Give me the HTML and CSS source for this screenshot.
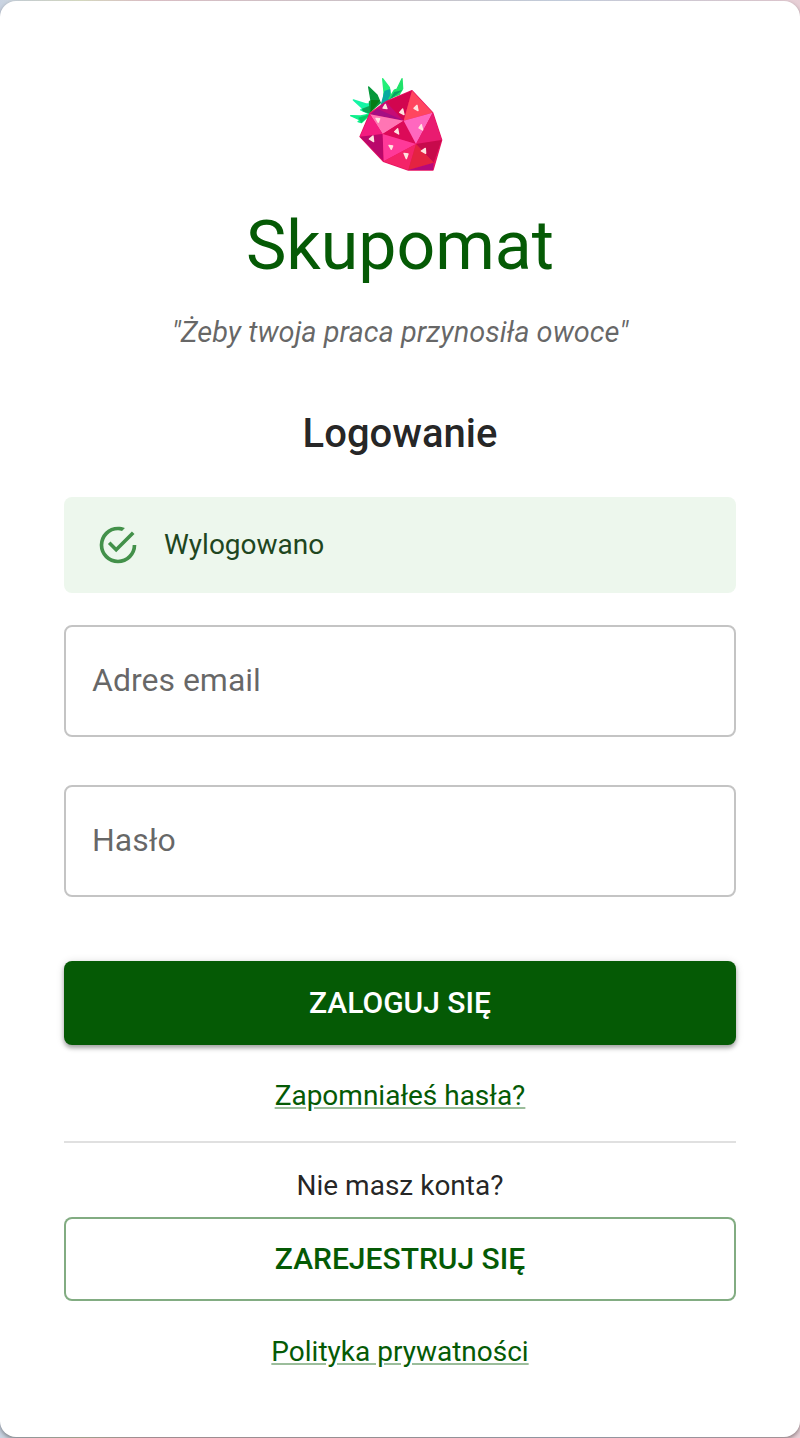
FILE: index.html
```html
<!DOCTYPE html>
<html lang="pl">

	<head>
		<meta charset="utf-8">
		<meta name="viewport" content="width=device-width,initial-scale=1">
		<title>Skupomat</title>
		<link rel="stylesheet" href="styles.css">
	</head>

	<body>
		<main class="card">
			<header class="brand">
				<svg class="logo" viewBox="30 15 300 300" aria-hidden="true">
					<!-- leaves -->
					<g stroke-width="4" stroke-linejoin="round">
						<path fill="#0ff08c" stroke="#0ff08c" d="M32 137L62 138L92 132L64 158L54 155L60 150Z" />
						<path fill="#06c964" d="M55 143L92 132L64 159Z" />
						<path fill="#14f5a4" stroke="#14f5a4" d="M40 90L78 102L105 102L85 130L62 120L67 115Z" />
						<path fill="#07a855" d="M66 116L105 101L90 132L68 124Z" />
						<path fill="#07983c" stroke="#07983c" d="M86 51L111 75L121 98L92 124L88 96L93 91Z" />
						<path fill="#047d15" d="M93 90L120 91L92 128Z" />
						<path fill="#23ef78" stroke="#23ef78" d="M128 26L148 52L152 76L130 98L132 66Z" />
						<path fill="#09aaa0" stroke="#09aaa0" d="M135 64L149 60L148 88L124 104Z" />
						<path fill="#20e26a" stroke="#20e26a" d="M186 26L188 56L178 73L147 86L163 60L171 57Z" />
						<path fill="#08a565" d="M163 66L188 60L148 90Z" />
					</g>
					<!-- fruit -->
					<path fill="#e81361" stroke="#e81361" stroke-width="4" stroke-linejoin="round" d="M90 130L138 95L216 62L278 128L305 210L279 300L205 300L130 274L60 200Z" />
					<path fill="#a50d83" d="M90 133L138 95L192 152Z" />
					<path fill="#c50b76" d="M112 116L138 95L192 152Z" />
					<path fill="#d2054f" d="M138 95L216 62L191 152Z" />
					<path fill="#ff465f" d="M216 62L278 128L191 152Z" />
					<path fill="#fb315f" d="M216 62L191 152L206 100Z" />
					<path fill="#ff75b4" d="M90 133L191 152L128 192Z" />
					<path fill="#f41c80" d="M90 133L128 192L60 200Z" />
					<path fill="#ba086b" d="M60 200L128 192L131 274Z" />
					<path fill="#dc0a58" d="M128 192L191 152L228 222Z" />
					<path fill="#ff67bf" d="M191 152L278 128L228 222Z" />
					<path fill="#e91b70" d="M278 128L305 210L228 222Z" />
					<path fill="#ff3999" d="M128 192L228 222L131 274Z" />
					<path fill="#f42368" d="M131 274L228 222L205 300Z" />
					<path fill="#c70a4c" d="M228 222L305 210L281 278Z" />
					<path fill="#e42341" d="M228 222L281 278L205 300Z" />
					<path fill="#b60a7a" d="M205 300L281 278L279 300Z" />
					<!-- seeds -->
					<g fill="#ffe3df" stroke="#ffe3df" stroke-width="4" stroke-linejoin="round">
						<path d="M136 103L141 116L129 114Z" />
						<path d="M188 117L192 134L179 127Z" />
						<path d="M231 106L234 122L222 115Z" />
						<path d="M108 145L119 146L115 157Z" />
						<path d="M173 176L176 192L164 185Z" />
						<path d="M244 164L248 180L237 174Z" />
						<path d="M99 198L101 215L88 207Z" />
						<path d="M147 226L158 228L154 238Z" />
						<path d="M192 250L204 252L199 266Z" />
						<path d="M256 235L257 250L244 243Z" />
					</g>
				</svg>
				<h1 class="title">Skupomat</h1>
				<p class="tagline">"Żeby twoja praca przynosiła owoce"</p>
			</header>

			<h2 class="subtitle">Logowanie</h2>

			<div class="alert" role="alert">
				<svg class="alert-icon" viewBox="0 0 24 24" aria-hidden="true">
					<path d="M20,12A8,8 0 0,1 12,20A8,8 0 0,1 4,12A8,8 0 0,1 12,4C12.76,4 13.5,4.11 14.2,4.31L15.77,2.74C14.61,2.26 13.34,2 12,2A10,10 0 0,0 2,12A10,10 0 0,0 12,22A10,10 0 0,0 22,12M7.91,10.08L6.5,11.5L11,16L21,6L19.59,4.58L11,13.17L7.91,10.08Z" />
				</svg>
				<span>Wylogowano</span>
			</div>

			<form class="login-form">
				<div class="field">
					<input type="email" id="email" class="field-input" placeholder=" " autocomplete="email">
					<label for="email" class="field-label">Adres email</label>
				</div>
				<div class="field">
					<input type="password" id="password" class="field-input" placeholder=" " autocomplete="current-password">
					<label for="password" class="field-label">Hasło</label>
				</div>
				<button type="submit" class="btn btn-primary">ZALOGUJ SIĘ</button>
			</form>

			<a class="link" href="#reset">Zapomniałeś hasła?</a>
			<hr class="divider">
			<p class="hint">Nie masz konta?</p>
			<button type="button" class="btn btn-outlined">ZAREJESTRUJ SIĘ</button>
			<a class="link" href="#privacy">Polityka prywatności</a>
		</main>
	</body>

</html>
```

FILE: styles.css
```css
* {
	box-sizing: border-box;
}

body {
	margin: 0;
	padding: 1px 0;
	background: linear-gradient(90deg, #c9d3e2, #dfe3c8 10%, #e5c8ce 18%, #d3cdd2 50%, #ccd6e6 70%, #e8cfd6);
	color: rgba(0, 0, 0, 0.87);
	font-family: Roboto, "Liberation Sans", sans-serif;
	font-size: 28px;
	line-height: 40px;
}

h1,
h2,
p {
	margin: 0;
}

.card {
	display: flex;
	flex-direction: column;
	padding: 74px 64px 65px;
	border-radius: 16px;
	background: #fff;
	box-shadow: 0 2px 4px rgba(0, 0, 0, 0.4);
}

.brand {
	display: flex;
	flex-direction: column;
	align-items: center;
	text-align: center;
}

.logo {
	width: 100px;
	height: 100px;
}

.title {
	margin-top: 29px;
	color: #055a05;
	font-size: 68px;
	font-weight: 400;
	line-height: 84px;
}

.tagline {
	margin-top: 24px;
	color: rgba(0, 0, 0, 0.6);
	font-size: 29px;
	font-style: italic;
}

.subtitle {
	margin-top: 50px;
	font-size: 40px;
	font-weight: 500;
	line-height: 64px;
	text-align: center;
}

.alert {
	display: flex;
	align-items: center;
	gap: 24px;
	margin-top: 31px;
	padding: 26px 32px;
	border-radius: 8px;
	background: #edf7ed;
	color: #1e4620;
}

.alert-icon {
	width: 44px;
	height: 44px;
	fill: #43914a;
}

.login-form {
	display: flex;
	flex-direction: column;
	margin-top: 32px;
}

.field {
	position: relative;
	margin-bottom: 48px;
}

.field-input {
	display: block;
	width: 100%;
	height: 112px;
	padding: 32px 28px;
	border: 2px solid rgba(0, 0, 0, 0.23);
	border-radius: 8px;
	background: none;
	color: inherit;
	font: inherit;
	font-size: 32px;
}

/* label lies over the empty box and moves to the border once it is used */
.field-label {
	position: absolute;
	top: 32px;
	left: 28px;
	color: rgba(0, 0, 0, 0.6);
	font-size: 32px;
	line-height: 46px;
	pointer-events: none;
}

.field-input:focus {
	border-color: #055a05;
	outline: none;
}

.field-input:focus + .field-label,
.field-input:not(:placeholder-shown) + .field-label {
	top: -16px;
	padding: 0 8px;
	background: #fff;
	font-size: 24px;
	line-height: 32px;
}

.btn {
	width: 100%;
	height: 84px;
	border: 0;
	border-radius: 8px;
	font: inherit;
	font-size: 30px;
	font-weight: 500;
	cursor: pointer;
}

.btn-primary {
	margin-top: 16px;
	background: #055a05;
	color: #fff;
	box-shadow: 0 3px 4px rgba(0, 0, 0, 0.3), 0 1px 8px rgba(0, 0, 0, 0.14);
}

.btn-outlined {
	margin-top: 11px;
	border: 2px solid rgba(5, 90, 5, 0.5);
	background: #fff;
	color: #055a05;
}

.link {
	align-self: center;
	margin-top: 31px;
	color: #055a05;
	text-decoration-color: rgba(5, 90, 5, 0.4);
}

.divider {
	width: 100%;
	height: 2px;
	margin: 25px 0 23px;
	border: 0;
	background: #e0e0e0;
}

.hint {
	text-align: center;
}
```
